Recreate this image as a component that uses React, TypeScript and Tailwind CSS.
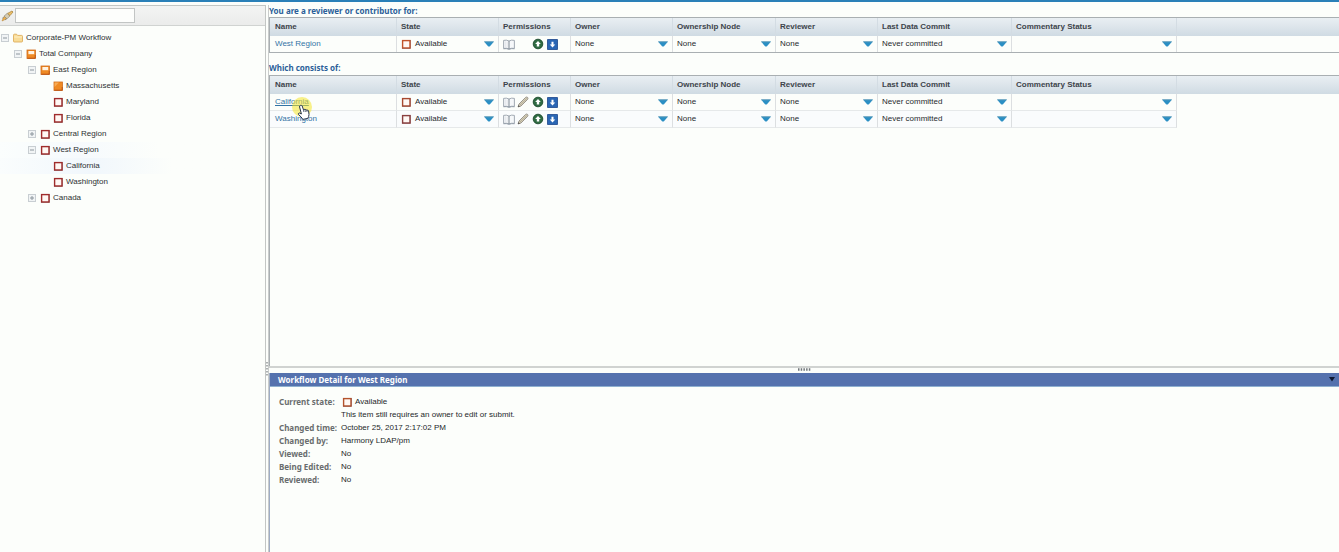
import React from "react";

type Status = "none" | "half" | "full" | "folder";

type Node = {
  label: string;
  depth: number;
  status: Status;
  toggle?: "open" | "closed";
  tint?: "strong" | "soft";
};

const nodes: Node[] = [
  { label: "Corporate-PM Workflow", depth: 0, status: "folder", toggle: "open" },
  { label: "Total Company", depth: 1, status: "half", toggle: "open" },
  { label: "East Region", depth: 2, status: "half", toggle: "open" },
  { label: "Massachusetts", depth: 3, status: "full" },
  { label: "Maryland", depth: 3, status: "none" },
  { label: "Florida", depth: 3, status: "none" },
  { label: "Central Region", depth: 2, status: "none", toggle: "closed" },
  { label: "West Region", depth: 2, status: "none", toggle: "open", tint: "soft" },
  { label: "California", depth: 3, status: "none", tint: "strong" },
  { label: "Washington", depth: 3, status: "none" },
  { label: "Canada", depth: 2, status: "none", toggle: "closed" },
];

const indents = ["pl-0", "pl-[13px]", "pl-[27px]", "pl-[40px]"];

function StatusIcon({ status, stroke = "#a02c2c" }: { status: Status; stroke?: string }) {
  if (status === "folder") {
    return (
      <svg width="10" height="10" viewBox="0 0 10 10" className="shrink-0" aria-hidden="true">
        <path d="M.5 8.2V2.2Q.5 1.2 1.4 1.2H3.6L4.6 2.4H8.6Q9.5 2.4 9.5 3.3V8.2Q9.5 9 8.7 9H1.3Q.5 9 .5 8.2Z" fill="#f8dc98" stroke="#dba64e" strokeWidth=".8" />
        <path d="M1.2 4H8.8" stroke="#fff0c4" strokeWidth="1" />
      </svg>
    );
  }
  if (status === "none") {
    return (
      <svg width="10" height="10" viewBox="0 0 10 10" className="shrink-0" aria-hidden="true">
        <rect x="1.6" y="1.6" width="7.4" height="7.4" fill="#fff8f4" stroke={stroke} strokeWidth="1.4" />
        <path d="M1 9.4H9.4V1" fill="none" stroke="#6b2020" strokeOpacity=".5" strokeWidth=".7" />
      </svg>
    );
  }
  return (
    <svg width="10" height="10" viewBox="0 0 10 10" className="shrink-0" aria-hidden="true">
      <rect x="1" y="1" width="8.4" height="8.4" fill="#ef8a24" stroke="#cf6a1a" strokeWidth=".8" />
      {status === "half" ? (
        <rect x="2.4" y="2" width="5.8" height="3.2" fill="#fff3e2" />
      ) : (
        <path d="M1.5 1.5H6L1.5 6Z" fill="#f8ab55" />
      )}
      <path d="M1.4 9.2H9.2V6" fill="none" stroke="#b3490f" strokeWidth=".8" />
    </svg>
  );
}

function Toggle({ kind, label }: { kind: "open" | "closed"; label: string }) {
  return (
    <button
      type="button"
      aria-label={(kind === "open" ? "Collapse " : "Expand ") + label}
      className="size-2 shrink-0"
    >
      <svg width="8" height="8" viewBox="0 0 8 8" className="block">
        <rect x=".5" y=".5" width="7" height="7" fill="#f1f4f5" stroke="#c8ced2" />
        <path d={kind === "open" ? "M2 4H6" : "M2 4H6M4 2V6"} stroke="#8c969d" strokeWidth="1" />
      </svg>
    </button>
  );
}

function TreeRow({ node }: { node: Node }) {
  const tint =
    node.tint === "strong"
      ? "bg-linear-to-r from-[#fafdfd] via-[#f1f7fc] via-35% to-[#fcfefb] to-65%"
      : node.tint === "soft"
        ? "bg-linear-to-r from-[#fbfefd] via-[#f6fafd] via-30% to-[#fcfefb] to-60%"
        : "";
  return (
    <li className={tint}>
      <div className={"flex h-4 items-center " + indents[node.depth]}>
        <span className="flex w-[13px] shrink-0 items-center pl-[1px]">
          {node.toggle && <Toggle kind={node.toggle} label={node.label} />}
        </span>
        <StatusIcon status={node.status} />
        <a href="#" className="ml-[3px] whitespace-nowrap text-[#2d3133]">
          {node.label}
        </a>
      </div>
    </li>
  );
}

function Brush() {
  return (
    <svg width="13" height="12" viewBox="0 0 13 12" className="shrink-0" aria-hidden="true">
      <path d="M1 11L3.2 6.2L6 8.6Z" fill="#f0b24a" stroke="#b98a42" strokeWidth=".6" />
      <path d="M3 6.2L6.2 3.4L8.8 6L6 8.8Z" fill="#d7cdb2" stroke="#8c8574" strokeWidth=".7" />
      <path d="M6.6 3.4L11 1L12 2L9 5.6Z" fill="#edc068" stroke="#a17b35" strokeWidth=".7" />
      <path d="M4 9.8L5.4 9.2M1.6 8.6L2.4 7" stroke="#777" strokeWidth=".7" />
    </svg>
  );
}

function Sidebar() {
  return (
    <aside className="flex w-[266px] shrink-0 flex-col border-t border-r border-[#c3c6c4]">
      <div className="flex h-5 items-center gap-[1px] border-b border-[#d0d3d1] bg-linear-to-b from-[#f3f4f3] to-[#ebeceb] pl-[1px]">
        <Brush />
        <input
          type="text"
          aria-label="Search workflow"
          className="h-[15px] w-[120px] border border-[#c2c5c4] bg-[#fdfefc] px-1 text-[8px] outline-none"
        />
      </div>
      <ul className="pt-1 font-['Liberation_Sans',Arial,sans-serif] text-[8px] leading-4">
        {nodes.map((n, i) => (
          <TreeRow key={i} node={n} />
        ))}
      </ul>
    </aside>
  );
}

function Arrow({ label }: { label: string }) {
  return (
    <button type="button" aria-label={label} className="shrink-0">
      <svg width="10" height="6" viewBox="0 0 10 6" className="block">
        <path d="M0 .6H10L6 5.2Q5 6 4 5.2Z" fill="#2a8fc4" />
        <path d="M.4 .8H9.6" stroke="#6a9db5" strokeWidth=".8" />
      </svg>
    </button>
  );
}

function Book() {
  return (
    <svg width="12" height="11" viewBox="0 0 12 11" aria-hidden="true">
      <path d="M.6 1.4Q3.4 .6 6 2Q8.6 .6 11.4 1.4V9.4Q8.6 8.8 6 10Q3.4 8.8 .6 9.4Z" fill="#f6f8fa" stroke="#98a2ac" strokeWidth=".9" />
      <path d="M6 2V10" stroke="#7d8791" strokeWidth="1" />
      <path d="M2.4 2.4V8.4M4.2 2.8V8.6" stroke="#dfe4e8" strokeWidth=".8" />
      <path d="M.4 9.8Q3.4 9.2 6 10.4Q8.6 9.2 11.6 9.8" fill="none" stroke="#8894a0" strokeWidth=".7" />
    </svg>
  );
}

function Pencil() {
  return (
    <svg width="12" height="12" viewBox="0 0 12 12" className="block" aria-hidden="true">
      <path d="M1 11L2 8L8.6 1.4Q9.6 .6 10.6 1.4Q11.4 2.4 10.6 3.4L4 10Z" fill="#d5cfb8" stroke="#86827a" strokeWidth=".8" />
      <path d="M3 9L9.8 2.4" stroke="#a9a28c" strokeWidth=".7" />
      <path d="M1 11L1.6 9.2L2.8 10.4Z" fill="#444" />
    </svg>
  );
}

function UpCircle() {
  return (
    <svg width="12" height="12" viewBox="0 0 12 12" aria-hidden="true">
      <circle cx="6" cy="6" r="4.8" fill="#2f6b42" stroke="#1b4a2b" strokeWidth=".9" />
      <path d="M6 3L8.8 6H7.2V8.4H4.8V6H3.2Z" fill="#fff" />
    </svg>
  );
}

function DownSquare() {
  return (
    <svg width="11" height="11" viewBox="0 0 11 11" aria-hidden="true">
      <rect x=".6" y=".6" width="9.8" height="9.8" fill="#2a66b4" stroke="#17438a" strokeWidth=".8" />
      <path d="M5.5 8.4L2.7 5.4H4.5V2.8H6.5V5.4H8.3Z" fill="#fff" />
    </svg>
  );
}

const columns = [
  "Name",
  "State",
  "Permissions",
  "Owner",
  "Ownership Node",
  "Reviewer",
  "Last Data Commit",
  "Commentary Status",
];

type Item = { name: string; edit?: boolean; hover?: boolean; stroke: string };

function Cell({ children, label }: { children?: React.ReactNode; label: string }) {
  return (
    <td className="border-r border-[#dcdfe1] p-0">
      <div className="flex items-center justify-between pr-[4px] pl-[4px]">
        <span className="flex items-center">{children}</span>
        <Arrow label={label} />
      </div>
    </td>
  );
}

function WorkflowTable({ items, ruled }: { items: Item[]; ruled?: boolean }) {
  return (
    <table className="w-full table-fixed border-separate border-spacing-0 font-['Liberation_Sans',Arial,sans-serif] text-[8px] leading-4 text-[#262a2d]">
      <colgroup>
        <col className="w-[127px]" />
        <col className="w-[102px]" />
        <col className="w-[72px]" />
        <col className="w-[102px]" />
        <col className="w-[103px]" />
        <col className="w-[102px]" />
        <col className="w-[134px]" />
        <col className="w-[165px]" />
        <col />
      </colgroup>
      <thead>
        <tr className="bg-linear-to-b from-[#e9eff3] via-[#dde5eb] to-[#cfdbe3]">
          {columns.map((c, i) => (
            <th
              key={c}
              scope="col"
              className={
                "h-[18px] border-r border-[#d3dce3] p-0 text-left font-bold whitespace-nowrap text-[#3d444b] " +
                (i === 0 ? "pl-[5px]" : "pl-[4px]")
              }
            >
              {c}
            </th>
          ))}
          <td className="p-0" />
        </tr>
      </thead>
      <tbody className={ruled ? "[&>tr>td:not(:last-child)]:border-b [&>tr>td]:border-b-[#e6e9ea] [&>tr:nth-child(2)>td:not(:last-child)]:bg-[#fafcfd]" : ""}>
        {items.map((it) => (
          <tr key={it.name}>
            <td className="border-r border-[#dcdfe1] p-0 pl-[5px]">
              <a href="#" className={"text-[#3474a5] " + (it.hover ? "underline" : "")}>
                {it.name}
              </a>
            </td>
            <Cell label="Change state">
              <StatusIcon status="none" stroke={it.stroke} />
              <span className="pl-[4px]">Available</span>
            </Cell>
            <td className="border-r border-[#dcdfe1] p-0">
              <div className="grid h-4 grid-cols-[14px_15px_15px_12px] items-center pl-[4px]">
                <Book />
                <span>{it.edit && <Pencil />}</span>
                <UpCircle />
                <DownSquare />
              </div>
            </td>
            <Cell label="Change owner">None</Cell>
            <Cell label="Change ownership node">None</Cell>
            <Cell label="Change reviewer">None</Cell>
            <Cell label="Commit options">Never committed</Cell>
            <Cell label="Commentary options" />
            <td className="p-0" />
          </tr>
        ))}
      </tbody>
    </table>
  );
}

function Pointer() {
  return (
    <svg width="30" height="32" viewBox="0 0 30 32" className="pointer-events-none absolute top-[5px] left-[18px]" aria-hidden="true">
      <circle cx="14" cy="13" r="10" fill="#f4e62c" fillOpacity=".55" />
      <path
        d="M12.4 11.4Q13.6 10.8 14.2 12L15.4 15.6Q16.2 14.8 17 15.8Q18 15 18.8 16.2Q20 15.6 20.6 17L21 20.4Q21 22.4 19.8 24.4L14.8 25.4Q13.4 22.8 10.6 20.6Q9.8 19.2 11.4 19L13.4 20L11.6 13Q11.4 11.8 12.4 11.4Z"
        fill="#fff"
        stroke="#26334a"
        strokeWidth="1"
        strokeLinejoin="round"
      />
      <path d="M15.4 15.6L15.8 18M17 15.8L17.4 18M18.8 16.2L19 18" stroke="#26334a" strokeWidth=".7" />
    </svg>
  );
}

const heading = "font-['Noto_Sans','Open_Sans',sans-serif] text-[8px] font-bold text-[#2b5f99]";

const details = [
  ["Changed time:", "October 25, 2017 2:17:02 PM"],
  ["Changed by:", "Harmony LDAP/pm"],
  ["Viewed:", "No"],
  ["Being Edited:", "No"],
  ["Reviewed:", "No"],
];

export default function App() {
  return (
    <div className="flex min-h-screen flex-col border-t-[2px] border-[#2a80b8] bg-[#fcfefb]">
      <div className="flex flex-1 pt-[3px]">
        <Sidebar />
        <div className="flex w-[3px] shrink-0 items-center border-r border-[#c9cccb] pt-[180px]">
          <svg width="2" height="14" viewBox="0 0 2 14" aria-hidden="true">
            <path d="M1 0V14" stroke="#8a8f92" strokeWidth="1.4" strokeDasharray="1.5 1.5" />
          </svg>
        </div>
        <main className="flex min-w-0 flex-1 flex-col">
          <section className="flex flex-1 flex-col border-b-[2px] border-[#d0d3d1]">
            <h2 className={heading + " h-3 leading-3"}>You are a reviewer or contributor for:</h2>
            <div className="border-y border-l border-[#a9afb2]">
              <WorkflowTable items={[{ name: "West Region", stroke: "#c2532a" }]} />
            </div>
            <h2 className={heading + " mt-2 h-[14px] leading-[14px]"}>Which consists of:</h2>
            <div className="relative flex-1 border-t border-l border-[#a9afb2]">
              <WorkflowTable
                ruled
                items={[
                  { name: "California", edit: true, hover: true, stroke: "#a84a30" },
                  { name: "Washington", edit: true, stroke: "#8a4040" },
                ]}
              />
              <div className="absolute top-[13px] left-0">
                <Pointer />
              </div>
            </div>
          </section>
          <div className="flex h-[5px] items-start justify-center">
            <svg width="13" height="3" viewBox="0 0 13 3" aria-hidden="true">
              <path d="M0 1.5H13" stroke="#70767a" strokeWidth="2.4" strokeDasharray="1.5 1.2" />
            </svg>
          </div>
          <section className="min-h-[179px] border-l border-[#9eacc4] text-[8px]">
            <header className="flex h-[14px] items-center justify-between border-b border-[#8fb0d0] bg-[#5572ae] pr-1 pl-2 font-['Noto_Sans','Open_Sans',sans-serif]">
              <h2 className="font-bold text-white">Workflow Detail for West Region</h2>
              <button type="button" aria-label="Collapse detail">
                <svg width="6" height="5" viewBox="0 0 6 5" className="block">
                  <path d="M0 0H6L3 4.5Z" fill="#0c1830" />
                </svg>
              </button>
            </header>
            <dl className="grid grid-cols-[62px_1fr] px-[9px] pt-2 leading-[13px] text-[#24282a] [&>dd]:font-['Liberation_Sans',Arial,sans-serif] [&>dt]:font-['Noto_Sans','Open_Sans',sans-serif] [&>dt]:font-bold [&>dt]:text-[#696d6e]">
              <dt>Current state:</dt>
              <dd>
                <div className="flex items-center gap-[3px] pl-[1px]">
                  <StatusIcon status="none" stroke="#b4532c" />
                  <span>Available</span>
                </div>
                <p>This item still requires an owner to edit or submit.</p>
              </dd>
              {details.map(([k, v]) => (
                <React.Fragment key={k}>
                  <dt>{k}</dt>
                  <dd>{v}</dd>
                </React.Fragment>
              ))}
            </dl>
          </section>
        </main>
      </div>
    </div>
  );
}
